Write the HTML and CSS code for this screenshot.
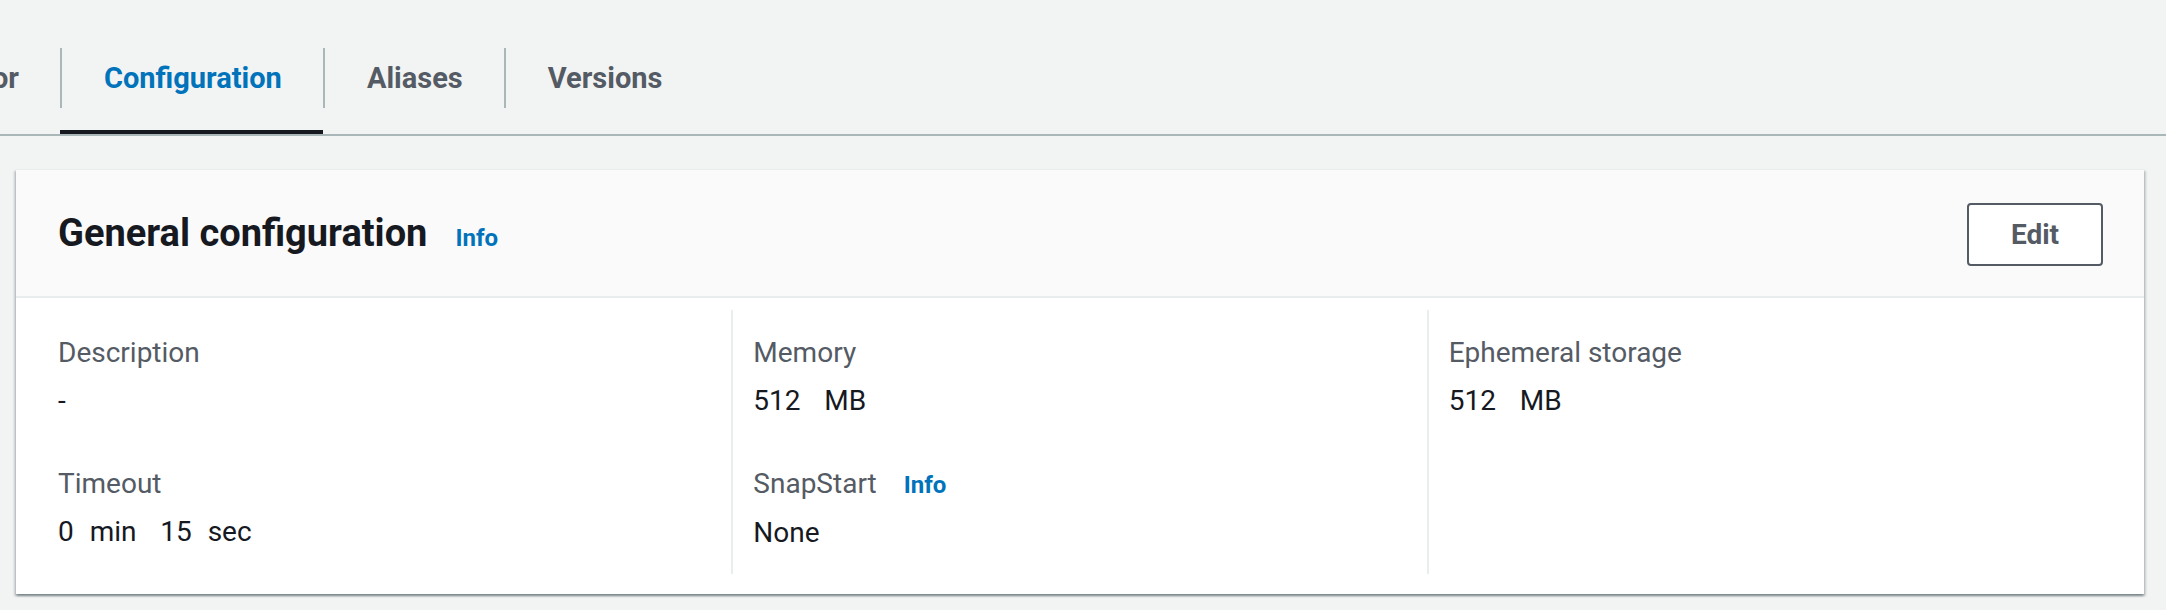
FILE: index.html
```html
<!DOCTYPE html>
<html lang="en">
<head>
<meta charset="utf-8">
<title>General configuration</title>
<link rel="stylesheet" href="styles.css">
</head>
<body>
<nav class="tabs">
  <div class="tab tab-first"><span class="tab-label">Monitor</span></div>
  <div class="tab tab-active"><span class="tab-label">Configuration</span></div>
  <div class="tab"><span class="tab-label">Aliases</span></div>
  <div class="tab"><span class="tab-label">Versions</span></div>
</nav>

<section class="card">
  <header class="card-header">
    <div class="card-title">
      <h2 class="heading">General configuration</h2>
      <a class="info-link info-heading" href="#">Info</a>
    </div>
    <button class="btn" type="button">Edit</button>
  </header>
  <div class="card-body">
    <div class="col">
      <div class="pair">
        <div class="label">Description</div>
        <div class="value">-</div>
      </div>
      <div class="pair">
        <div class="label">Timeout</div>
        <div class="value">0&nbsp; min &nbsp; 15&nbsp; sec</div>
      </div>
    </div>
    <div class="col col-bordered">
      <div class="pair">
        <div class="label">Memory</div>
        <div class="value">512&nbsp;&nbsp; MB</div>
      </div>
      <div class="pair">
        <div class="label">SnapStart <a class="info-link info-label" href="#">Info</a></div>
        <div class="value">None</div>
      </div>
    </div>
    <div class="col col-bordered">
      <div class="pair">
        <div class="label">Ephemeral storage</div>
        <div class="value">512&nbsp;&nbsp; MB</div>
      </div>
    </div>
  </div>
</section>
</body>
</html>
```

FILE: styles.css
```css
* {
  box-sizing: border-box;
}

html, body {
  margin: 0;
  padding: 0;
}

body {
  background: #f2f3f3;
  font-family: Roboto, "Noto Sans", "Liberation Sans", sans-serif;
  color: #16191f;
  width: 2166px;
  height: 610px;
  overflow: hidden;
}

/* Tabs */
.tabs {
  display: flex;
  padding-top: 28px;
  border-bottom: 2px solid #aab7b8;
}

.tab {
  padding: 20px 0 22px;
  border-bottom: 4px solid transparent;
  font-size: 29px;
  font-weight: 700;
  color: #545b64;
  white-space: nowrap;
}

.tab + .tab .tab-label {
  border-left: 2px solid #aab7b8;
}

.tab-label {
  display: block;
  height: 60px;
  line-height: 60px;
  padding: 0 41px 0 42px;
}

.tab-first {
  width: 60px;
  display: flex;
  justify-content: flex-end;
  overflow: hidden;
}

.tab-first .tab-label {
  padding: 0 41px 0 0;
}

.tab-active {
  border-bottom-color: #16191f;
  color: #0073bb;
}

/* Card */
.card {
  margin: 33px 0 0 16px;
  width: 2128px;
  background: #ffffff;
  border-top: 1px solid #eaeded;
  box-shadow: 0 2px 2px 0 rgba(0, 28, 36, 0.3), 2px 2px 2px 0 rgba(0, 28, 36, 0.15), -2px 2px 2px 0 rgba(0, 28, 36, 0.15);
}

.card-header {
  display: flex;
  align-items: center;
  justify-content: space-between;
  height: 128px;
  padding: 0 41px 0 42px;
  background: #fafafa;
  border-bottom: 2px solid #eaeded;
}

.card-title {
  display: flex;
  align-items: baseline;
}

.heading {
  margin: 0;
  font-size: 38px;
  line-height: 44px;
  font-weight: 700;
  color: #16191f;
}

.info-link {
  color: #0073bb;
  font-weight: 700;
  text-decoration: none;
  font-size: 24px;
}

.info-heading {
  margin-left: 28px;
}

.info-label {
  margin-left: 20px;
}

.btn {
  width: 136px;
  height: 63px;
  margin-top: 2px;
  border: 2px solid #545b64;
  border-radius: 4px;
  background: #ffffff;
  color: #545b64;
  font-family: inherit;
  font-size: 28px;
  font-weight: 700;
  padding: 0;
}

.card-body {
  display: grid;
  grid-template-columns: repeat(3, 1fr);
  padding: 12px 22px 20px 20px;
}

.col {
  padding: 23px 20px 21px 22px;
}

.col-bordered {
  border-left: 2px solid #eaeded;
  padding-left: 20px;
}

.pair + .pair {
  margin-top: 43px;
}

.label {
  font-size: 28px;
  line-height: 40px;
  color: #545b64;
}

.value {
  margin-top: 8px;
  font-size: 28px;
  line-height: 40px;
  word-spacing: 1px;
  color: #16191f;
}
```
